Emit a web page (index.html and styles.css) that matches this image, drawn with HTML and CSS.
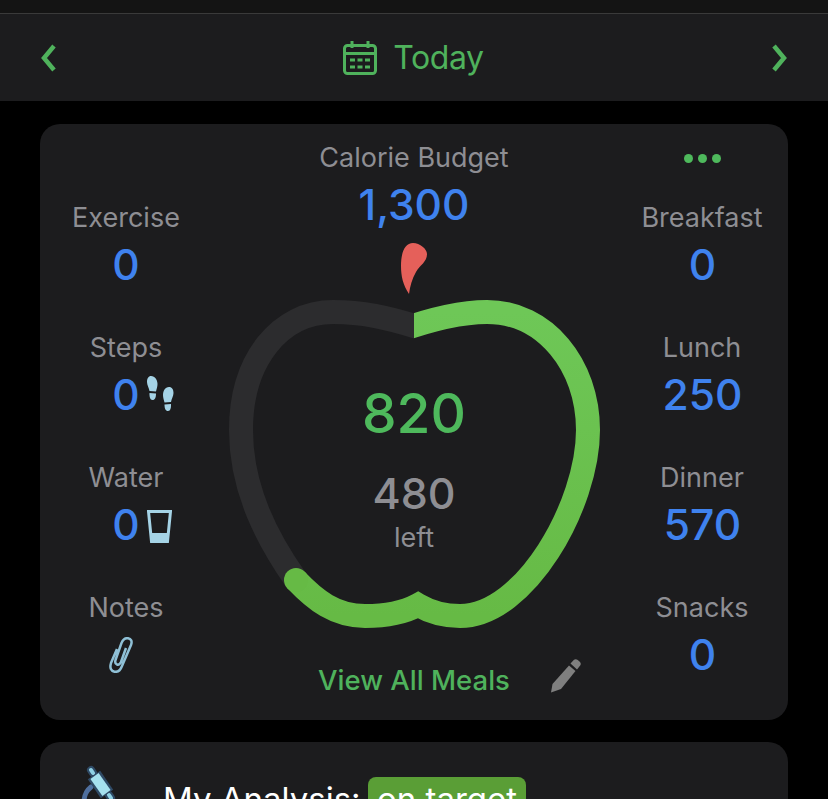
FILE: index.html
```html
<!DOCTYPE html>
<html lang="en">
<head>
  <meta charset="UTF-8">
  <title>Today</title>
  <link rel="stylesheet" href="styles.css">
</head>
<body>

  <div class="status"></div>

  <nav class="datebar">
    <svg class="chev" width="18" height="28" viewBox="0 0 18 28"><path d="M15 2 L5 14 L15 26"/></svg>
    <div class="date">
      <svg class="cal" width="36" height="36" viewBox="0 0 36 36">
        <rect x="2.500" y="5.500" width="31" height="28" rx="3"/>
        <path d="M2 13.500 H34 M10 1 V8 M26 1 V8"/>
        <path class="cal-dots" d="M8 20 H13 M15.500 20 H20.500 M23 20 H28 M8 27 H13 M15.500 27 H20.500 M23 27 H28"/>
      </svg>
      <span>Today</span>
    </div>
    <svg class="chev" width="18" height="28" viewBox="0 0 18 28"><path d="M3 2 L13 14 L3 26"/></svg>
  </nav>

  <main class="content">
    <section class="card summary">

      <div class="side side-left">
        <div class="stat">
          <div class="label">Exercise</div>
          <div class="val-row"><span class="val">0</span></div>
        </div>
        <div class="stat">
          <div class="label">Steps</div>
          <div class="val-row">
            <span class="val">0</span>
            <svg class="extra feet" width="27" height="36" viewBox="0 0 27 36" fill="#a5d3e6">
              <path d="M4 0 C8 0 10.500 4 10.500 8 C10.500 11 9.500 13 9 15.500 L2.500 15 C2 12 0 9 0 6 C0 2.500 1.500 0 4 0Z"/>
              <path d="M2.500 17 L9 17.500 C9 21.500 8 24 5.500 24 C3 24 2.300 20.500 2.500 17Z"/>
              <path d="M22 11 C25 11 26.500 13.500 26.500 17 C26.500 20 24.500 23 24 26 L17.500 26.500 C17 24 16 22 16 19 C16 15 18 11 22 11Z"/>
              <path d="M17.500 28.500 L24 28 C24.200 31.500 23.500 35 21 35 C18.500 35 17.500 32.500 17.500 28.500Z"/>
            </svg>
          </div>
        </div>
        <div class="stat">
          <div class="label">Water</div>
          <div class="val-row">
            <span class="val">0</span>
            <svg class="extra glass" width="25" height="33" viewBox="0 0 25 33">
              <path d="M1.500 1.500 H23.500 L20.500 31.500 H4.500 Z" fill="none" stroke="#a5d3e6" stroke-width="3"/>
              <path d="M3.500 23 H21.500 L20.500 32 H4.500 Z" fill="#a5d3e6"/>
            </svg>
          </div>
        </div>
        <div class="stat">
          <div class="label">Notes</div>
          <div class="val-row">
            <svg class="clip" width="26" height="36" viewBox="0 0 26 36" fill="none" stroke="#8fc0d6" stroke-width="2.500">
              <path d="M9 12 L3 26 C1.500 31 3 34 6.500 34.700 C10 35.300 12.500 33 14 29 L23 8 C24.500 4 23 2 20 1.300 C17 0.700 15 2.500 13.500 6 L7.500 23 C6.800 25.500 7.500 27 9 27.500 C10.500 28 12 27 13 25 L18 11"/>
            </svg>
          </div>
        </div>
      </div>

      <div class="middle">
        <div class="label">Calorie Budget</div>
        <div class="val budget">1,300</div>
        <div class="apple">
          <svg class="apple-art" width="372" height="392" viewBox="228 240 372 392" fill="none" stroke-width="24">
            <defs>
              <linearGradient id="ring" x1="0" y1="0" x2="0" y2="1">
                <stop offset="0" stop-color="#6ec757"/>
                <stop offset="1" stop-color="#66ba45"/>
              </linearGradient>
              <clipPath id="left-half"><path d="M228 240 H414 V632 H228 Z"/></clipPath>
              <clipPath id="past-top"><path d="M414 240 H601 V632 H228 V400 H414 Z"/></clipPath>
            </defs>
            <path d="M409 294 C403 285 401 276 401 266 C401 252 405 243 413 243 C420 243 427 249 427 254 C427 262 420 265 416 272 C412 279 410 286 409 294Z" fill="#e5605a" stroke="none"/>
            <path d="M430 331 C385 316 360 312 333 312 C280 312 241 360 241 430 C241 490 268 540 296 580" stroke="#2c2c2e" clip-path="url(#left-half)"/>
            <path d="M398 331 C440 316 465 312 487 312 C545 312 588 365 588 430 C588 505 525 616 460 616 C445 616 430 612 418 605 C405 612 385 616 365 616 C335 616 315 600 296 580" stroke="url(#ring)" clip-path="url(#past-top)"/>
            <circle cx="296" cy="580" r="12" fill="#66ba45" stroke="none"/>
          </svg>
          <div class="apple-text">
            <div class="eaten">820</div>
            <div class="left-num">480</div>
            <div class="label left-word">left</div>
          </div>
        </div>
        <div class="meals-row">
          <span class="meals-link">View All Meals</span>
          <svg class="pencil" width="32" height="34" viewBox="0 0 32 34" fill="#7f7f7f">
            <path d="M20.500 4.500 L24 0.800 C25 0 26.500 0 27.800 1 L30 3 C31 4.200 31 5.500 30.200 6.500 L27 10.500 Z"/>
            <path d="M19 6.500 L25.500 12 L11 30 L1 33.500 L2.500 25 Z"/>
          </svg>
        </div>
      </div>

      <div class="side side-right">
        <div class="dots"><i></i><i></i><i></i></div>
        <div class="stat">
          <div class="label">Breakfast</div>
          <div class="val-row"><span class="val">0</span></div>
        </div>
        <div class="stat">
          <div class="label">Lunch</div>
          <div class="val-row"><span class="val">250</span></div>
        </div>
        <div class="stat">
          <div class="label">Dinner</div>
          <div class="val-row"><span class="val">570</span></div>
        </div>
        <div class="stat">
          <div class="label">Snacks</div>
          <div class="val-row"><span class="val">0</span></div>
        </div>
      </div>

    </section>

    <section class="card analysis">
      <svg class="scope" width="36" height="40" viewBox="0 0 36 40" fill="none" stroke-linecap="round">
        <path d="M11 22 C6 26 4 30 4 38" stroke="#4f6f9e" stroke-width="5"/>
        <path d="M11 5 L13 8 M29 30 L31 33" stroke="#2f4a66" stroke-width="8"/>
        <path d="M11 5 L13 8 M29 30 L31 33" stroke="#8fd0e4" stroke-width="4"/>
        <path d="M14 10 L27 29" stroke="#2f4a66" stroke-width="15" stroke-linecap="butt"/>
        <path d="M14.500 11 L26.500 28" stroke="#a5e0ee" stroke-width="10" stroke-linecap="butt"/>
      </svg>
      <div class="analysis-title">My Analysis: <span class="badge">on target</span></div>
    </section>
  </main>

</body>
</html>
```

FILE: styles.css
```css
html, body {
  margin: 0;
  height: 799px;
  overflow: hidden;
}
body {
  font-family: 'Inter', 'Liberation Sans', sans-serif;
  background: #000;
  color: #8e8e93;
}
.status {
  height: 13px;
  background: #141414;
  border-bottom: 1px solid #3a3a3a;
}
.datebar {
  height: 87px;
  background: #1c1c1e;
  display: flex;
  align-items: center;
  justify-content: space-between;
  padding: 0 39px;
}
.chev path {
  fill: none;
  stroke: #4fb25c;
  stroke-width: 4.500;
}
.date {
  display: flex;
  align-items: center;
  gap: 15px;
  margin-right: 2px;
  color: #4fb25c;
  font-size: 32px;
  letter-spacing: -0.4px;
}
.cal {
  fill: none;
  stroke: #4fb25c;
  stroke-width: 3;
}
.content {
  padding: 23px 40px 0;
  display: flex;
  flex-direction: column;
  gap: 22px;
}
.card {
  background: #1c1c1e;
  border-radius: 20px;
}
.summary {
  height: 596px;
  display: grid;
  grid-template-columns: 172px 1fr 172px;
}
.side {
  display: flex;
  flex-direction: column;
}
.side-left {
  padding-top: 77px;
}
.dots {
  height: 77px;
  padding-bottom: 9px;
  box-sizing: border-box;
  display: flex;
  align-items: center;
  justify-content: center;
  gap: 5px;
}
.dots i {
  width: 9px;
  height: 9px;
  border-radius: 50%;
  background: #4eb95c;
}
.stat {
  height: 130px;
  display: flex;
  flex-direction: column;
  gap: 6px;
  text-align: center;
}
.label {
  font-size: 27px;
  line-height: 34px;
  color: #8e8e93;
  text-align: center;
}
.val {
  font-size: 42.500px;
  font-weight: 500;
  line-height: 48px;
  color: #3f82ee;
  text-align: center;
}
.val-row {
  display: grid;
  grid-template-columns: 1fr auto 1fr;
  align-items: center;
  min-height: 48px;
}
.val-row .val {
  grid-column: 2;
}
.side-right .val-row {
  padding-left: 1px;
}
.extra {
  grid-column: 3;
  margin-left: 7px;
}
.feet {
  margin-top: -2px;
}
.glass {
  margin-top: 2px;
}
.clip {
  grid-column: 2;
  margin-left: -10px;
}
.middle {
  padding-top: 17px;
  display: flex;
  flex-direction: column;
}
.budget {
  margin-top: 6px;
}
.apple {
  margin: 11px auto 0;
  display: grid;
  justify-items: center;
  align-items: start;
}
.apple-art, .apple-text {
  grid-area: 1 / 1;
}
.apple-text {
  padding-top: 139px;
  text-align: center;
}
.eaten {
  font-size: 55px;
  font-weight: 500;
  line-height: 68px;
  color: #4eb95c;
}
.left-num {
  margin-top: 21px;
  font-size: 43px;
  font-weight: 500;
  line-height: 50px;
  color: #8e8e93;
}
.left-word {
  margin-top: 3px;
}
.meals-row {
  margin-top: 31px;
  display: grid;
  grid-template-columns: 1fr auto 1fr;
  align-items: center;
}
.meals-link {
  grid-column: 2;
  font-size: 27.500px;
  font-weight: 500;
  line-height: 34px;
  color: #4fb25c;
}
.pencil {
  margin-left: 40px;
  margin-top: -8px;
}
.analysis {
  height: 120px;
  display: flex;
  align-items: flex-start;
  padding: 23px 0 0 40px;
}
.analysis-title {
  margin-left: 47px;
  margin-top: 12px;
  font-size: 33px;
  line-height: 44px;
  color: #fff;
  white-space: nowrap;
}
.badge {
  display: inline-block;
  margin-left: -2px;
  background: #5a9e36;
  border-radius: 8px;
  padding: 0 9px;
  line-height: 44px;
}
```
